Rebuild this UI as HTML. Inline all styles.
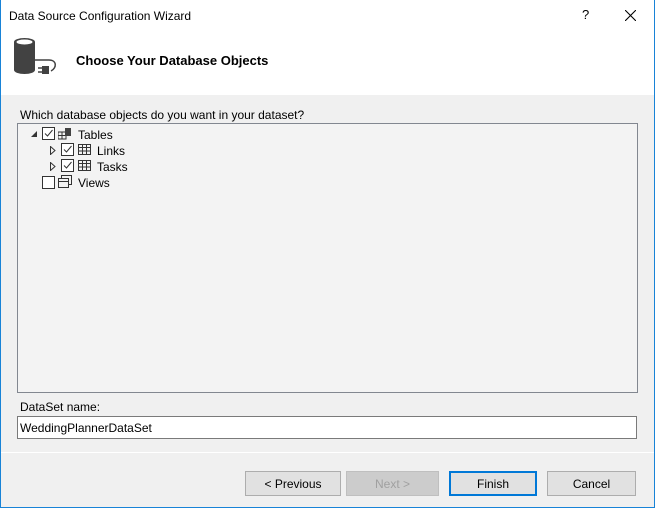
<!DOCTYPE html>
<html><head><style>
*{margin:0;padding:0;box-sizing:border-box}
body{width:655px;height:508px;overflow:hidden;background:#f0f0f0;font-family:"Segoe UI","Liberation Sans",sans-serif;font-size:12px;color:#000;position:relative}
.win{position:absolute;left:0;top:0;width:655px;height:508px;border:1px solid #1883d7;border-top:none}
.hdr{position:absolute;left:1px;top:0;width:653px;height:95px;background:#fff}
.abs{position:absolute;white-space:nowrap}
.tree{position:absolute;left:17px;top:123px;width:621px;height:270px;background:#f3f3f3;border:1px solid #828790}
.cb{position:absolute;width:13px;height:13px;border:1px solid #333;background:#fff}
.cb svg{position:absolute;left:0;top:0}
.inp{position:absolute;left:17px;top:416px;width:620px;height:23px;background:#fff;border:1px solid #7a7a7a;padding:4px 2px;font-size:12px}
.sep{position:absolute;left:1px;top:452px;width:653px;height:1px;background:#fff}
.btn{position:absolute;top:471px;height:25px;background:#e1e1e1;border:1px solid #adadad;text-align:center;line-height:24px}
</style></head><body>
<div class="win"></div>
<div class="hdr"></div>
<div class="abs" style="left:9px;top:9px">Data Source Configuration Wizard</div>
<div class="abs" style="left:582px;top:7px;font-size:13px">?</div>
<svg class="abs" style="left:625px;top:10px" width="11" height="11"><path d="M0 0L11 11M11 0L0 11" stroke="#000" stroke-width="1.1"/></svg>
<svg class="abs" style="left:13px;top:38px" width="45" height="40">
<rect x="1" y="4" width="21" height="28" fill="#424242"/><ellipse cx="11.5" cy="4" rx="10.5" ry="4" fill="#424242"/><ellipse cx="11.5" cy="4" rx="8" ry="2.5" fill="#fff"/><ellipse cx="11.5" cy="32" rx="10.5" ry="4" fill="#424242"/>
<path d="M38 33 C44 30 44 22 36 22 L22 22" stroke="#424242" stroke-width="1.5" fill="none"/>
<rect x="29" y="28" width="7" height="8" fill="#424242"/><path d="M25 30h4M25 34h4" stroke="#424242" stroke-width="1.5"/>
</svg>
<div class="abs" style="left:76px;top:53px;font-size:13px;font-weight:bold">Choose Your Database Objects</div>
<div class="abs" style="left:20px;top:108px">Which database objects do you want in your dataset?</div>
<div class="tree"></div>
<svg class="abs" style="left:31px;top:131px" width="7" height="7"><path d="M6 0L6 6L0 6Z" fill="#333"/></svg>
<div class="cb" style="left:42px;top:127px"><svg width="11" height="11"><path d="M2 5.5L4.5 8L9.5 2" stroke="#333" fill="none"/></svg></div>
<svg class="abs" style="left:58px;top:127px" width="14" height="13"><rect x="0" y="5" width="8" height="7" fill="none" stroke="#333"/><path d="M0 8.5h8M4 5v7" stroke="#333"/><rect x="7" y="1" width="6" height="8" fill="#424242"/></svg>
<div class="abs" style="left:78px;top:128px">Tables</div>
<svg class="abs" style="left:50px;top:146px" width="6" height="9"><path d="M0.5 0.5L5 4.5L0.5 8.5Z" fill="none" stroke="#333"/></svg>
<div class="cb" style="left:61px;top:143px"><svg width="11" height="11"><path d="M2 5.5L4.5 8L9.5 2" stroke="#333" fill="none"/></svg></div>
<svg class="abs" style="left:78px;top:144px" width="13" height="11"><rect x="0.5" y="0.5" width="12" height="10" fill="none" stroke="#333"/><path d="M0 3.5h13M0 7h13M4.5 0v11M8.5 0v11" stroke="#333"/></svg>
<div class="abs" style="left:97px;top:144px">Links</div>
<svg class="abs" style="left:50px;top:162px" width="6" height="9"><path d="M0.5 0.5L5 4.5L0.5 8.5Z" fill="none" stroke="#333"/></svg>
<div class="cb" style="left:61px;top:159px"><svg width="11" height="11"><path d="M2 5.5L4.5 8L9.5 2" stroke="#333" fill="none"/></svg></div>
<svg class="abs" style="left:78px;top:160px" width="13" height="11"><rect x="0.5" y="0.5" width="12" height="10" fill="none" stroke="#333"/><path d="M0 3.5h13M0 7h13M4.5 0v11M8.5 0v11" stroke="#333"/></svg>
<div class="abs" style="left:97px;top:160px">Tasks</div>
<div class="cb" style="left:42px;top:176px"></div>
<svg class="abs" style="left:58px;top:175px" width="14" height="14"><rect x="3.5" y="0.5" width="10" height="9" fill="none" stroke="#333"/><rect x="0.5" y="3.5" width="10" height="9" fill="#f3f3f3" stroke="#333"/><path d="M0 6.5h11" stroke="#333"/></svg>
<div class="abs" style="left:78px;top:176px">Views</div>
<div class="abs" style="left:20px;top:400px">DataSet name:</div>
<div class="inp">WeddingPlannerDataSet</div>
<div class="sep"></div>
<div class="btn" style="left:245px;width:96px">&lt; Previous</div>
<div class="btn" style="left:346px;width:93px;background:#ccc;border-color:#bfbfbf;color:#a0a0a0">Next &gt;</div>
<div class="btn" style="left:449px;width:88px;border:2px solid #0078d7;line-height:22px">Finish</div>
<div class="btn" style="left:547px;width:89px">Cancel</div>
</body></html>
